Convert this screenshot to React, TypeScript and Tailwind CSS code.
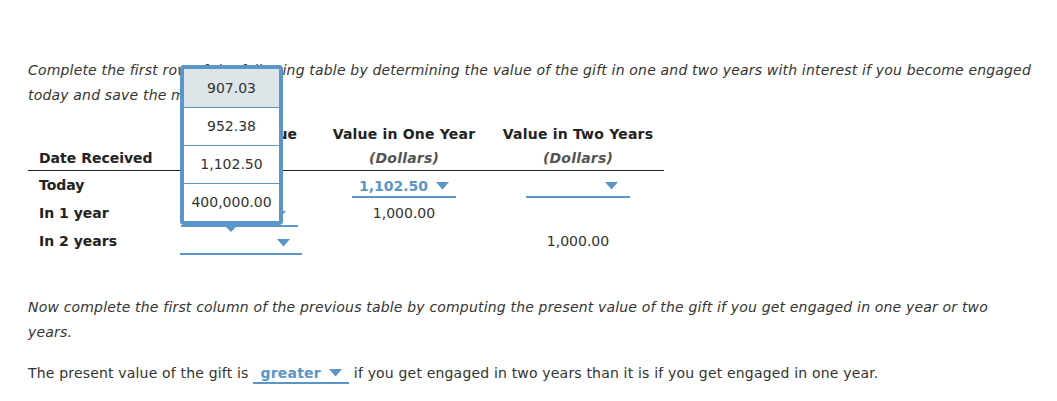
import React from 'react';

const blue = 'text-[#5a96c8]';

const Caret = () => (
  <svg width="13" height="8" viewBox="0 0 13 8" className="shrink-0">
    <polygon points="0,0 13,0 6.5,7.5" fill="#5a96c8" />
  </svg>
);

const Select = ({ value, width }: { value?: string; width: string }) => (
  <span className={`inline-flex items-center justify-center gap-2 border-b-2 border-[#5a96c8] h-[22px] ${width}`}>
    {value && <span className={`font-bold ${blue}`}>{value}</span>}
    <span className={value ? '' : 'ml-auto mr-3'}>
      <Caret />
    </span>
  </span>
);

const options = ['907.03', '952.38', '1,102.50', '400,000.00'];

export default function App() {
  return (
    <div className="relative w-[1057px] h-[401px] bg-white text-[14px] text-[#333] px-[28px] pt-[58px]" style={{ fontFamily: '"DejaVu Sans", Verdana, sans-serif' }}>
      <p className="italic leading-[25px] tracking-[0.18px] -mr-[14px]">
        Complete the first row of the following table by determining the value of the gift in one and two years with interest if you become engaged today and save the money.
      </p>

      <div className="mt-[14px] w-[636px]">
        <div className="grid grid-cols-[140px_148px_176px_172px] border-b border-[#222] leading-[24px]">
          <div className="pl-[11px] pt-[24px] font-bold text-[#222]">Date Received</div>
          <div className="text-center font-bold text-[#222]">
            <div>Present Value</div>
            <div className="italic text-[#555]">(Dollars)</div>
          </div>
          <div className="text-center font-bold text-[#222] tracking-[0.2px]">
            <div>Value in One Year</div>
            <div className="italic text-[#555]">(Dollars)</div>
          </div>
          <div className="text-center font-bold text-[#222] tracking-[0.2px]">
            <div>Value in Two Years</div>
            <div className="italic text-[#555]">(Dollars)</div>
          </div>
        </div>

        <div className="grid grid-cols-[140px_148px_176px_172px] h-[28px] items-center">
          <div className="pl-[11px] font-bold text-[#222]">Today</div>
          <div className="text-center">1,000.00</div>
          <div className="flex justify-center pt-[4px]"><Select value="1,102.50" width="w-[104px]" /></div>
          <div className="flex justify-center pt-[4px]"><Select width="w-[104px]" /></div>
        </div>
        <div className="grid grid-cols-[140px_148px_176px_172px] h-[28px] items-center">
          <div className="pl-[11px] font-bold text-[#222]">In 1 year</div>
          <div className="pl-[13px] pt-[4px]"><Select width="w-[117px]" /></div>
          <div className="text-center">1,000.00</div>
          <div />
        </div>
        <div className="grid grid-cols-[140px_148px_176px_172px] h-[28px] items-center">
          <div className="pl-[11px] font-bold text-[#222]">In 2 years</div>
          <div className="pl-[12px] pt-[4px]"><Select width="w-[122px]" /></div>
          <div />
          <div className="text-center">1,000.00</div>
        </div>
      </div>

      <p className="italic leading-[25px] mt-[40px] tracking-[0.18px]">
        Now complete the first column of the previous table by computing the present value of the gift if you get engaged in one year or two years.
      </p>
      <p className="leading-[25px] mt-[16px] tracking-[0.18px]">
        The present value of the gift is{' '}
        <span className="inline-flex items-center gap-2 border-b-2 border-[#5a96c8] h-[20px] w-[96px] justify-center align-middle">
          <span className={`font-bold ${blue}`}>greater</span>
          <Caret />
        </span>{' '}
        if you get engaged in two years than it is if you get engaged in one year.
      </p>

      <div className="absolute left-[180px] top-[65px] w-[103px]">
        <div className="border-4 border-[#5a96c8] rounded-[4px] bg-white">
          {options.map((o, i) => (
            <div
              key={o}
              className={`h-[38px] flex items-center justify-center text-[#333] ${i > 0 ? 'border-t border-[#5a96c8]' : ''} ${i === 0 ? 'bg-[#dde5e8]' : ''}`}
            >
              {o}
            </div>
          ))}
        </div>
        <svg width="16" height="9" viewBox="0 0 16 9" className="absolute left-[43px] -bottom-[8px]">
          <polygon points="0,0 16,0 8,8" fill="#5a96c8" />
        </svg>
      </div>
    </div>
  );
}
